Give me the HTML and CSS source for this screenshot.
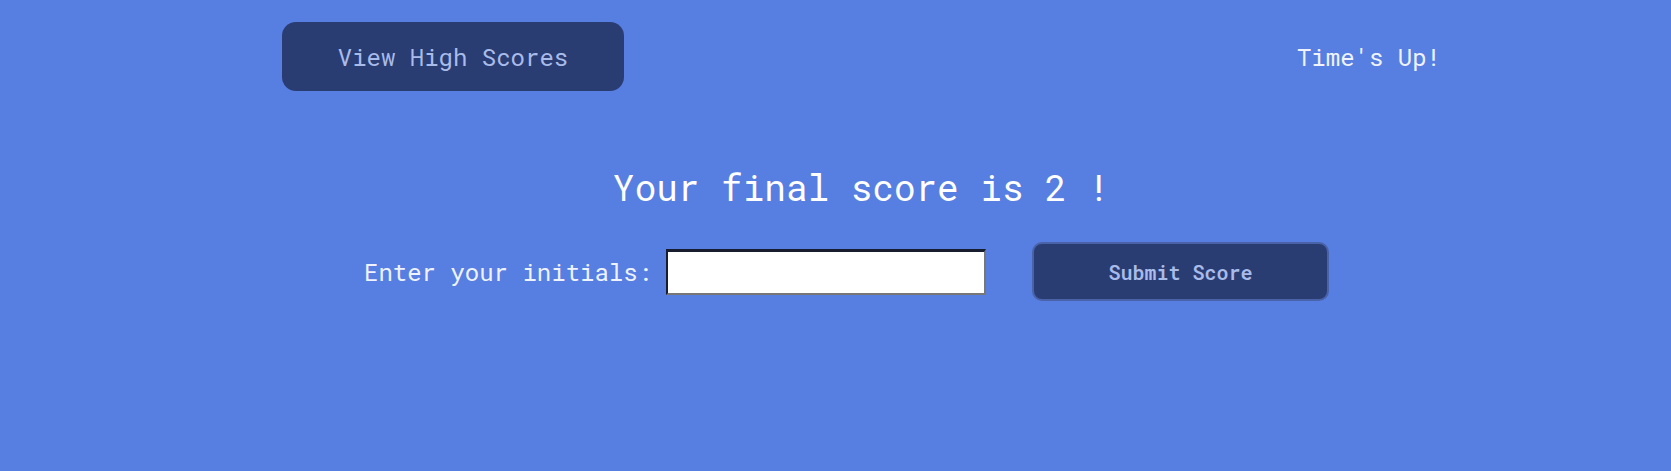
FILE: index.html
```html
<!DOCTYPE html>
<html lang="en">
<head>
<meta charset="utf-8">
<title>Quiz</title>
<link rel="stylesheet" href="styles.css">
</head>
<body>
<div class="page">
  <header class="header">
    <button class="hs-btn">View High Scores</button>
    <div class="timer">Time's Up!</div>
  </header>
  <main class="final">
    <h1 class="final-title">Your final score is 2 !</h1>
    <form class="score-form">
      <label class="score-label" for="initials">Enter your initials:</label>
      <input class="score-input" id="initials" type="text">
      <button class="submit-btn" type="button">Submit Score</button>
    </form>
  </main>
</div>
</body>
</html>
```

FILE: styles.css
```css
html, body {
  margin: 0;
  padding: 0;
}
body {
  background: #577ee1;
  font-family: "Roboto Mono", "DejaVu Sans Mono", monospace;
  width: 1671px;
  height: 471px;
  overflow: hidden;
}
.page {
  margin-left: 282px;
  width: 1159px;
}
.header {
  display: flex;
  justify-content: space-between;
  align-items: center;
  padding-top: 22px;
}
.hs-btn {
  width: 342px;
  height: 69px;
  border: none;
  border-radius: 14px;
  background: #2a3d73;
  color: #a9bbe9;
  font-family: inherit;
  font-size: 24px;
  padding: 0;
}
.timer {
  color: #eef3ff;
  font-size: 24px;
}
.final-title {
  margin: 74px 0 0;
  text-align: center;
  color: #ffffff;
  font-size: 36px;
  font-weight: 400;
  line-height: 44px;
}
.score-form {
  margin: 33px 0 0 82px;
  display: flex;
  align-items: center;
}
.score-label {
  color: #eef3ff;
  font-size: 24px;
  margin-right: 14px;
}
.score-input {
  box-sizing: border-box;
  width: 320px;
  height: 46px;
  margin: 0 46px 0 0;
  background: #ffffff;
  border-style: solid;
  border-width: 3px 2px 2px 2px;
  border-color: #171c2e #777777 #777777 #171c2e;
  padding: 0 6px;
  font-family: inherit;
  font-size: 20px;
}
.submit-btn {
  box-sizing: border-box;
  width: 297px;
  height: 59px;
  border: 2px solid #4a63a8;
  border-radius: 10px;
  background: #2a3d73;
  color: #a9bbe9;
  font-family: inherit;
  font-size: 20px;
  font-weight: 600;
  padding: 0;
}
```
